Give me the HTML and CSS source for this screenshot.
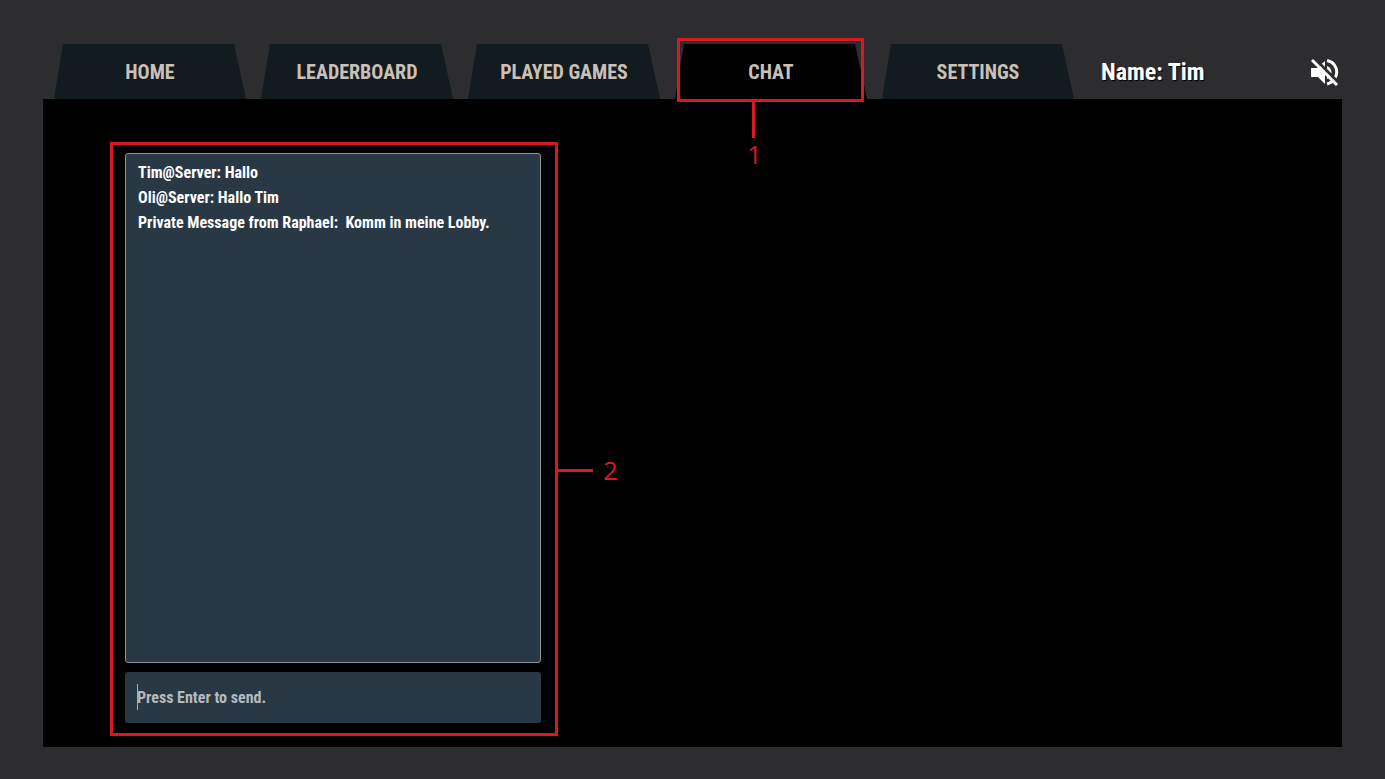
FILE: index.html
```html
<!DOCTYPE html>
<html lang="en">
<head>
<meta charset="utf-8">
<title>Chat</title>
<meta name="viewport" content="width=device-width, initial-scale=1">
<link rel="stylesheet" href="styles.css">
</head>
<body>
<header class="header">
  <nav class="tabs">
    <div class="slot"><button class="tab" type="button">HOME</button></div>
    <div class="slot"><button class="tab" type="button">LEADERBOARD</button></div>
    <div class="slot"><button class="tab" type="button">PLAYED GAMES</button></div>
    <div class="slot">
      <button class="tab tab-active" type="button" aria-current="page">CHAT</button>
      <div class="mark mark-tab"><span class="mark-number">1</span></div>
    </div>
    <div class="slot"><button class="tab" type="button">SETTINGS</button></div>
  </nav>
  <p class="player">Name: Tim</p>
  <button class="mute" type="button" aria-label="Unmute">
    <svg viewBox="0 0 28 28" width="28" height="28" aria-hidden="true">
      <path fill="#fff" d="M0 10h6L14 3v23L7 19H0z"/>
      <path fill="none" stroke="#fff" stroke-width="3" d="M16 2.500C29 5 29 23 16 26"/>
      <path fill="#fff" d="M16 8c6 2 6 11 0 13z"/>
      <path stroke="#2d2d2f" stroke-width="3" d="M3 0l24 24"/>
      <path stroke="#fff" stroke-width="3" d="M1 2l25 25"/>
    </svg>
  </button>
</header>
<main class="panel">
  <section class="chat">
    <div class="log" role="log">
      <p class="message">Tim@Server: Hallo</p>
      <p class="message">Oli@Server: Hallo Tim</p>
      <p class="message">Private Message from Raphael:  Komm in meine Lobby.</p>
    </div>
    <div class="entry">
      <input class="field" type="text" aria-label="Message" placeholder="Press Enter to send.">
      <span class="caret"></span>
    </div>
    <div class="mark mark-chat"><span class="mark-number">2</span></div>
  </section>
</main>
</body>
</html>
```

FILE: styles.css
```css
* { box-sizing: border-box; }

body {
  margin: 0;
  min-height: 100vh;
  padding: 44px 43px 32px;
  display: flex;
  flex-direction: column;
  background: #2d2d2f;
  color: #fff;
  font-family: "Roboto Condensed", "Liberation Sans Narrow", "Open Sans Condensed", "Liberation Sans", sans-serif;
  font-weight: 700;
}

p { margin: 0; }

button { font: inherit; border: 0; cursor: pointer; }

.header {
  display: flex;
  align-items: center;
  padding-left: 11px;
}

.tabs {
  display: flex;
  flex: 0 1 1020px;
  gap: 15px;
}

.slot {
  position: relative;
  flex: 1 1 0;
}

.tab {
  display: block;
  width: 100%;
  height: 55px;
  padding: 0;
  background: #111b20;
  color: #cbc0b7;
  font-size: 20px;
  clip-path: polygon(9px 0, calc(100% - 12px) 0, 100% 100%, 0 100%);
}

.tab-active { background: #000; }

.player {
  margin-left: 27px;
  font-size: 24px;
  text-shadow: 1px 1px 1px #000;
}

.mute {
  margin-left: auto;
  margin-right: 3px;
  padding: 0;
  background: none;
}

.mute svg { display: block; }

.panel {
  flex: 1;
  display: flex;
  padding: 54px 82px 24px;
  background: #000;
}

.chat {
  position: relative;
  flex: 0 1 416px;
  display: flex;
  flex-direction: column;
  gap: 9px;
}

.log {
  flex: 1;
  padding: 6px 12px;
  border: 1px solid #8d9599;
  border-radius: 3px;
  background: #293845;
  font-size: 16px;
  line-height: 25px;
}

.message { white-space: pre-wrap; }

.entry { position: relative; display: flex; }

.field {
  width: 100%;
  height: 51px;
  padding: 0 12px;
  border: 0;
  border-radius: 3px;
  background: #293845;
  color: #fff;
  font: inherit;
  font-size: 16px;
}

.field::placeholder { color: #b5babd; opacity: 1; }

.caret {
  position: absolute;
  left: 12px;
  top: 12px;
  width: 1px;
  height: 26px;
  background: #a5adb2;
}

.mark {
  position: absolute;
  border: 3px solid #d71920;
  color: #d71920;
  font: 400 26px/28px "Open Sans", sans-serif;
  pointer-events: none;
}

.mark::after {
  content: "";
  position: absolute;
  background: #d71920;
}

.mark-number { position: absolute; }

.mark-tab { inset: -6px 3px -3px 2px; }

.mark-tab::after {
  left: 72px;
  top: 100%;
  width: 3px;
  height: 39px;
}

.mark-tab .mark-number { left: 67px; top: calc(100% + 41px); }

.mark-chat { inset: -11px -17px -13px -15px; }

.mark-chat::after {
  left: 100%;
  top: 324px;
  width: 38px;
  height: 3px;
}

.mark-chat .mark-number { left: calc(100% + 48px); top: 311px; }
```
